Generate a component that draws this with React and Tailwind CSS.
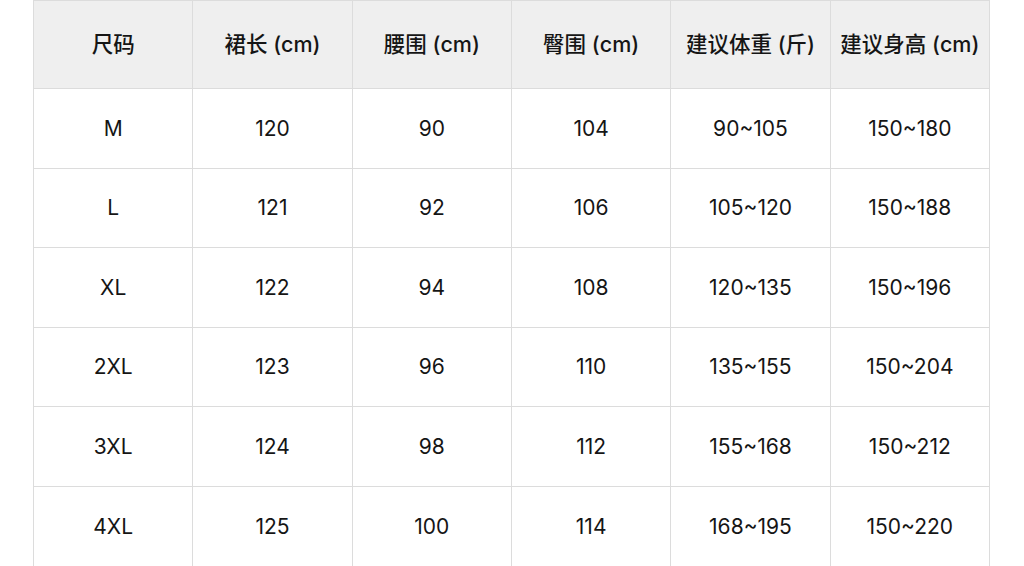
import React from 'react';

const headers = ['尺码', '裙长 (cm)', '腰围 (cm)', '臀围 (cm)', '建议体重 (斤)', '建议身高 (cm)'];

const rows = [
    ['M', '120', '90', '104', '90~105', '150~180'],
    ['L', '121', '92', '106', '105~120', '150~188'],
    ['XL', '122', '94', '108', '120~135', '150~196'],
    ['2XL', '123', '96', '110', '135~155', '150~204'],
    ['3XL', '124', '98', '112', '155~168', '150~212'],
    ['4XL', '125', '100', '114', '168~195', '150~220'],
];

const App = () => {
    return (
        <div className="w-[1024px] h-[566px] bg-white overflow-hidden" style={{ fontFamily: 'Inter, "Noto Sans CJK SC", sans-serif' }}>
            <table className="ml-[33px] w-[957px] border-collapse table-fixed text-[21px] text-[#151515]">
                <thead>
                    <tr className="h-[88px] bg-[#efefef]">
                        {headers.map((h, i) => (
                            <th key={i} className="border border-[#dcdcdc] font-medium text-[21.5px] text-center align-middle">{h}</th>
                        ))}
                    </tr>
                </thead>
                <tbody>
                    {rows.map((row, r) => (
                        <tr key={r} className="h-[79.6px]">
                            {row.map((cell, c) => (
                                <td key={c} className="border border-[#dcdcdc] text-center align-middle">{cell}</td>
                            ))}
                        </tr>
                    ))}
                </tbody>
            </table>
        </div>
    );
};

export default App;
